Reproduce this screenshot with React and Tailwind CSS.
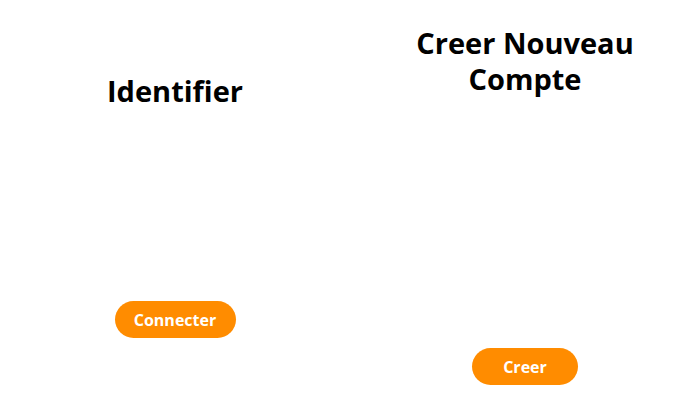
export default function App() {
  return (
    <div className="flex w-[700px] h-[400px] bg-white font-['Open_Sans',sans-serif]">
      <div className="w-1/2 flex flex-col items-center pt-[73px]">
        <h2 className="text-[29px] leading-[36px] font-bold text-black text-center">
          Identifier
        </h2>
        <button className="mt-[192px] w-[121px] h-[37px] rounded-full bg-[#ff8c00] text-white font-bold text-[16px]">
          Connecter
        </button>
      </div>
      <div className="w-1/2 flex flex-col items-center pt-[25px]">
        <h2 className="w-[240px] text-[29px] leading-[36px] font-bold text-black text-center">
          Creer Nouveau Compte
        </h2>
        <button className="mt-[251px] w-[106px] h-[37px] rounded-full bg-[#ff8c00] text-white font-bold text-[16px]">
          Creer
        </button>
      </div>
    </div>
  );
}
